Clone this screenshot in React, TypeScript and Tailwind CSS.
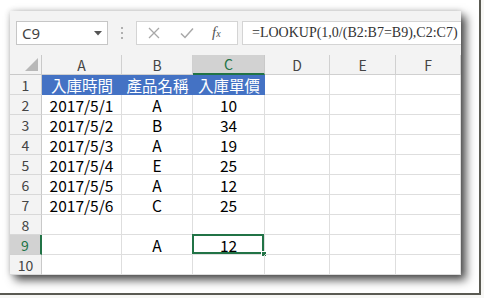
import React from "react";

const cols = ["A", "B", "C", "D", "E", "F"];

const rows: string[][] = [
  ["入庫時間", "產品名稱", "入庫單價", "", "", ""],
  ["2017/5/1", "A", "10", "", "", ""],
  ["2017/5/2", "B", "34", "", "", ""],
  ["2017/5/3", "A", "19", "", "", ""],
  ["2017/5/4", "E", "25", "", "", ""],
  ["2017/5/5", "A", "12", "", "", ""],
  ["2017/5/6", "C", "25", "", "", ""],
  ["", "", "", "", "", ""],
  ["", "A", "12", "", "", ""],
  ["", "", "", "", "", ""],
];

const cellFont = { fontFamily: '"Noto Sans CJK TC", "Noto Sans", sans-serif' };

function FormulaBar() {
  return (
    <div className="flex h-[44px] items-center bg-[#f3f3f3]">
      <div className="ml-[6px] flex h-[24px] w-[92px] items-center justify-between border border-[#c6c6c6] bg-white pl-[5px] pr-[5px]">
        <span className="text-[15px] leading-[18px] text-[#444]" style={{ fontFamily: '"Noto Sans", sans-serif' }}>
          C9
        </span>
        <svg width="8" height="5" viewBox="0 0 8 5">
          <path d="M0 0 L8 0 L4 4.5 Z" fill="#555" />
        </svg>
      </div>
      <div className="ml-[13px] flex h-[12px] w-[2px] flex-col justify-between">
        <span className="h-[2px] w-[2px] bg-[#b0b0b0]" />
        <span className="h-[2px] w-[2px] bg-[#b0b0b0]" />
        <span className="h-[2px] w-[2px] bg-[#b0b0b0]" />
      </div>
      <div className="ml-[13px] flex h-[24px] w-[102px] items-center border border-[#d4d4d4] bg-white">
        <svg className="ml-[11px]" width="12" height="12" viewBox="0 0 12 12">
          <path d="M1 1 L11 11 M11 1 L1 11" stroke="#a8a8a8" strokeWidth="1.3" />
        </svg>
        <svg className="ml-[20px]" width="14" height="12" viewBox="0 0 14 12">
          <path d="M1 6.5 L5 10.5 L13 1.5" stroke="#a8a8a8" strokeWidth="1.5" fill="none" />
        </svg>
        <span
          className="ml-[18px] text-[15px] leading-[18px] italic text-[#555]"
          style={{ fontFamily: '"Liberation Serif", serif' }}
        >
          f<span className="text-[10px]">x</span>
        </span>
      </div>
      <div className="ml-[4px] flex h-[24px] flex-1 items-center border-y border-l border-[#d4d4d4] bg-white pl-[9px]">
        <span className="text-[14px] leading-[18px] text-[#333]" style={{ fontFamily: '"Liberation Serif", serif' }}>
          =LOOKUP(1,0/(B2:B7=B9),C2:C7)
        </span>
      </div>
    </div>
  );
}

function Sheet() {
  return (
    <div
      className="grid grid-cols-[32px_80px_71px_72px_65px_66px_65px] auto-rows-[20px] bg-white leading-[18px]"
      style={cellFont}
    >
      <div className="relative border-b border-r border-[#c9c9c9] bg-[#f3f3f3]">
        <svg className="absolute bottom-[3px] right-[3px]" width="13" height="13" viewBox="0 0 13 13">
          <path d="M13 0 L13 13 L0 13 Z" fill="#b8b8b8" />
        </svg>
      </div>
      {cols.map((c) =>
        c === "C" ? (
          <div
            key={c}
            className="flex items-center justify-center border-b-2 border-r border-b-[#217346] border-r-[#c9c9c9] bg-[#d2d2d2] text-[14px] text-[#217346]"
          >
            {c}
          </div>
        ) : (
          <div
            key={c}
            className="flex items-center justify-center border-b border-r border-[#d0d0d0] bg-[#f3f3f3] text-[14px] text-[#444]"
          >
            {c}
          </div>
        )
      )}
      {rows.map((r, i) => (
        <React.Fragment key={i}>
          {i === 8 ? (
            <div className="flex items-center justify-center border-b border-r-2 border-b-[#d0d0d0] border-r-[#217346] bg-[#d2d2d2] text-[14px] text-[#217346]">
              {i + 1}
            </div>
          ) : (
            <div className="flex items-center justify-center border-b border-r border-b-[#d8d8d8] border-r-[#c9c9c9] bg-[#f3f3f3] text-[14px] text-[#444]">
              {i + 1}
            </div>
          )}
          {r.map((v, j) => {
            const head = i === 0 && j < 3;
            const sel = i === 8 && j === 2;
            return (
              <div
                key={j}
                className={
                  head
                    ? "flex items-center justify-center bg-[#4472c4] text-[15.5px] text-white"
                    : "relative flex items-center justify-center border-b border-r border-[#dedede] text-[15.5px] text-black"
                }
              >
                {v}
                {sel && (
                  <>
                    <div className="absolute -left-[1px] -top-[1px] bottom-0 right-0 border-2 border-[#217346]" />
                    <div className="absolute -bottom-[3px] -right-[3px] h-[6px] w-[6px] border border-white bg-[#217346]" />
                  </>
                )}
              </div>
            );
          })}
        </React.Fragment>
      ))}
    </div>
  );
}

export default function App() {
  return (
    <div className="h-[298px] w-[484px] overflow-hidden bg-[#f7f7f5]">
      <div className="h-[295px] w-[481px] border-b-2 border-r-2 border-[#5a5a52] bg-white pl-[10px] pt-[11px]">
        <div className="w-[451px] shadow-[5px_5px_9px_rgba(0,0,0,0.7),0_0_6px_rgba(0,0,0,0.18)]">
          <FormulaBar />
          <Sheet />
        </div>
      </div>
    </div>
  );
}
